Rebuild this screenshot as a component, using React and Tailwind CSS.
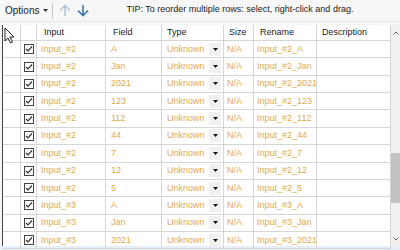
import { Fragment } from 'react'

const rows = [
  ['Input_#2', 'A'],
  ['Input_#2', 'Jan'],
  ['Input_#2', '2021'],
  ['Input_#2', '123'],
  ['Input_#2', '112'],
  ['Input_#2', '44'],
  ['Input_#2', '7'],
  ['Input_#2', '12'],
  ['Input_#2', '5'],
  ['Input_#3', 'A'],
  ['Input_#3', 'Jan'],
  ['Input_#3', '2021'],
]

function Check() {
  return (
    <div className="w-[10px] h-[10px] border border-[#444] bg-white flex items-center justify-center">
      <svg width="8" height="8" viewBox="0 0 8 8">
        <path d="M1 4 L3 6 L7 1.5" fill="none" stroke="#333" strokeWidth="1.2" />
      </svg>
    </div>
  )
}

function Row({ input, field }) {
  const cell = 'h-full border-r border-b border-[#d6d6d6] flex items-center'
  return (
    <div className="flex h-[17.36px] text-[#e2aa4c]">
      <div className={`${cell} w-[18px]`} />
      <div className={`${cell} w-[16px] justify-center`}>
        <Check />
      </div>
      <div className={`${cell} w-[69px] pl-[4px]`}>{input}</div>
      <div className={`${cell} w-[56px] pl-[5px]`}>{field}</div>
      <div className={`${cell} w-[62px] pl-[5px] justify-between`}>
        <span>Unknown</span>
        <span className="w-[12px] h-[13px] mr-[2px] bg-[#f0f0f0] flex items-center justify-center">
          <svg width="5" height="3" viewBox="0 0 5 3">
            <path d="M0 0 H5 L2.5 3 Z" fill="#111" />
          </svg>
        </span>
      </div>
      <div className={`${cell} w-[30px] pl-[3px]`}>N/A</div>
      <div className={`${cell} w-[63px] pl-[3px]`}>{input}_{field}</div>
      <div className={`${cell} w-[74px]`} />
    </div>
  )
}

export default function App() {
  const head = 'h-full border-r border-b border-[#d6d6d6] flex items-center'
  return (
    <div
      className="relative w-[400px] h-[250px] overflow-hidden bg-[#f4f5f7] text-[9px] leading-none text-[#222]"
      style={{ fontFamily: '"Liberation Sans", Arial, sans-serif' }}
    >
      {/* toolbar */}
      <div className="h-[22px] flex items-center bg-[#f7f7f8] border-b border-[#e6e8ec]">
        <span className="ml-[5px] text-[10px]">Options</span>
        <svg className="ml-[4px]" width="5" height="3" viewBox="0 0 5 3">
          <path d="M0 0 H5 L2.5 3 Z" fill="#333" />
        </svg>
        <div className="ml-[4px] w-px h-[16px] bg-[#c8c8c8]" />
        <svg className="ml-[6px]" width="12" height="13" viewBox="0 0 12 13">
          <path d="M6 12 V1.5 M1 6.5 L6 1.5 L11 6.5" fill="none" stroke="#b9c5d3" strokeWidth="1.6" />
        </svg>
        <svg className="ml-[6px]" width="12" height="13" viewBox="0 0 12 13">
          <path d="M6 1 V11.5 M1 6.5 L6 11.5 L11 6.5" fill="none" stroke="#4274b0" strokeWidth="1.6" />
        </svg>
        <span className="ml-[37px] -mt-[3px]">TIP: To reorder multiple rows: select, right-click and drag.</span>
      </div>

      {/* grid */}
      <div className="flex mt-[3px] h-[221px]">
        <div className="w-[3px]" />
        <div className="flex-1 bg-white border-l border-[#444] flex">
          <div className="w-[388px]">
            <div className="flex h-[16px]">
              <div className={`${head} w-[18px]`} />
              <div className={`${head} w-[16px]`} />
              <div className={`${head} w-[69px] pl-[7px]`}>Input</div>
              <div className={`${head} w-[56px] pl-[7px]`}>Field</div>
              <div className={`${head} w-[62px] pl-[5px]`}>Type</div>
              <div className={`${head} w-[30px] pl-[5px]`}>Size</div>
              <div className={`${head} w-[63px] pl-[6px]`}>Rename</div>
              <div className={`${head} w-[74px] pl-[5px]`}>Description</div>
            </div>
            {rows.map(([a, b], i) => (
              <Fragment key={i}>
                <Row input={a} field={b} />
              </Fragment>
            ))}
          </div>
          {/* scrollbar */}
          <div className="w-[9px] bg-[#f0f0f0] flex flex-col items-center">
            <svg className="mt-[6px]" width="6" height="4" viewBox="0 0 6 4">
              <path d="M0.5 3.5 L3 1 L5.5 3.5" fill="none" stroke="#666" strokeWidth="1" />
            </svg>
            <div className="mt-[118px] w-full h-[50px] bg-[#c2c2c2]" />
            <svg className="mt-[34px]" width="6" height="4" viewBox="0 0 6 4">
              <path d="M0.5 0.5 L3 3 L5.5 0.5" fill="none" stroke="#666" strokeWidth="1" />
            </svg>
          </div>
        </div>
      </div>
      <div className="h-[4px] bg-[#e8eef8]" />

      {/* mouse pointer */}
      <svg className="absolute left-[4px] top-[27px]" width="12" height="17" viewBox="0 0 12 17">
        <path d="M1 1 V14 L4 11 L6.5 16 L8.5 15 L6 10 H10 Z" fill="#fff" stroke="#222" strokeWidth="1" />
      </svg>
    </div>
  )
}
